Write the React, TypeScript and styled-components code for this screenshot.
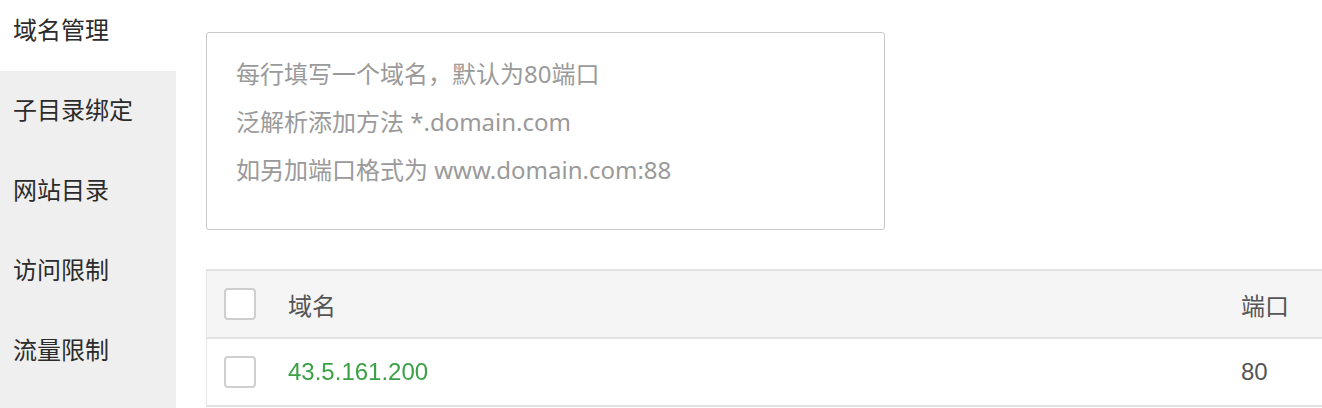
import React from "react";
import styled, { createGlobalStyle } from "styled-components";

const Global = createGlobalStyle`
  html, body { margin: 0; padding: 0; background: #fff; overflow: hidden; }
  body { font-family: "Liberation Sans", "Noto Sans CJK SC", sans-serif; }
`;

const Page = styled.div`
  display: flex;
  width: 1322px;
  height: 408px;
  overflow: hidden;
`;

const Sidebar = styled.nav`
  flex: 0 0 176px;
  background: #efefef;
  display: flex;
  flex-direction: column;
  margin-top: -9px;
  height: 417px;
`;

const NavItem = styled.div<{ $active?: boolean }>`
  height: 80px;
  line-height: 80px;
  padding-left: 13px;
  font-size: 24px;
  color: #2b2b2b;
  background: ${(p) => (p.$active ? "#fff" : "transparent")};
  white-space: nowrap;
`;

const Main = styled.main`
  flex: 1;
  padding: 32px 0 0 30px;
  display: flex;
  flex-direction: column;
  gap: 39px;
  min-width: 0;
`;

const DomainInput = styled.textarea`
  box-sizing: border-box;
  width: 679px;
  height: 198px;
  border: 1px solid #c8c8c8;
  border-radius: 3px;
  padding: 17px 29px;
  font-family: "Noto Sans", "Noto Sans CJK SC", sans-serif;
  font-size: 24px;
  line-height: 48px;
  resize: none;
  outline: none;
  color: #333;
  &::placeholder { color: #9a9a9a; }
`;

const Table = styled.div`
  width: 1200px;
  border-top: 2px solid #e2e2e2;
`;

const Row = styled.div<{ $head?: boolean }>`
  display: grid;
  grid-template-columns: 81px 953px 1fr;
  align-items: center;
  height: 66px;
  background: ${(p) => (p.$head ? "#f5f5f5" : "#fff")};
  border-bottom: 2px solid #e2e2e2;
  border-left: 1px solid #e6e6e6;
  font-size: 24px;
  color: #555;
`;

const CheckCell = styled.div`
  padding-left: 17px;
  display: flex;
  align-items: center;
`;

const CheckBox = styled.span`
  box-sizing: border-box;
  width: 32px;
  height: 32px;
  border: 2px solid #cfcfcf;
  border-radius: 4px;
  background: #fff;
`;

const Cell = styled.div`
  white-space: nowrap;
`;

const DomainLink = styled.a`
  color: #3aa146;
  text-decoration: none;
  filter: blur(0.6px);
`;

export default function App() {
  const nav = ["域名管理", "子目录绑定", "网站目录", "访问限制", "流量限制"];
  return (
    <>
      <Global />
      <Page>
        <Sidebar>
          {nav.map((n, i) => (
            <NavItem key={n} $active={i === 0}>
              {n}
            </NavItem>
          ))}
        </Sidebar>
        <Main>
          <DomainInput
            placeholder={
              "每行填写一个域名，默认为80端口\n泛解析添加方法 *.domain.com\n如另加端口格式为 www.domain.com:88"
            }
          />
          <Table>
            <Row $head>
              <CheckCell>
                <CheckBox />
              </CheckCell>
              <Cell>域名</Cell>
              <Cell>端口</Cell>
            </Row>
            <Row>
              <CheckCell>
                <CheckBox />
              </CheckCell>
              <Cell>
                <DomainLink href="#">43.5.161.200</DomainLink>
              </Cell>
              <Cell>80</Cell>
            </Row>
          </Table>
        </Main>
      </Page>
    </>
  );
}
